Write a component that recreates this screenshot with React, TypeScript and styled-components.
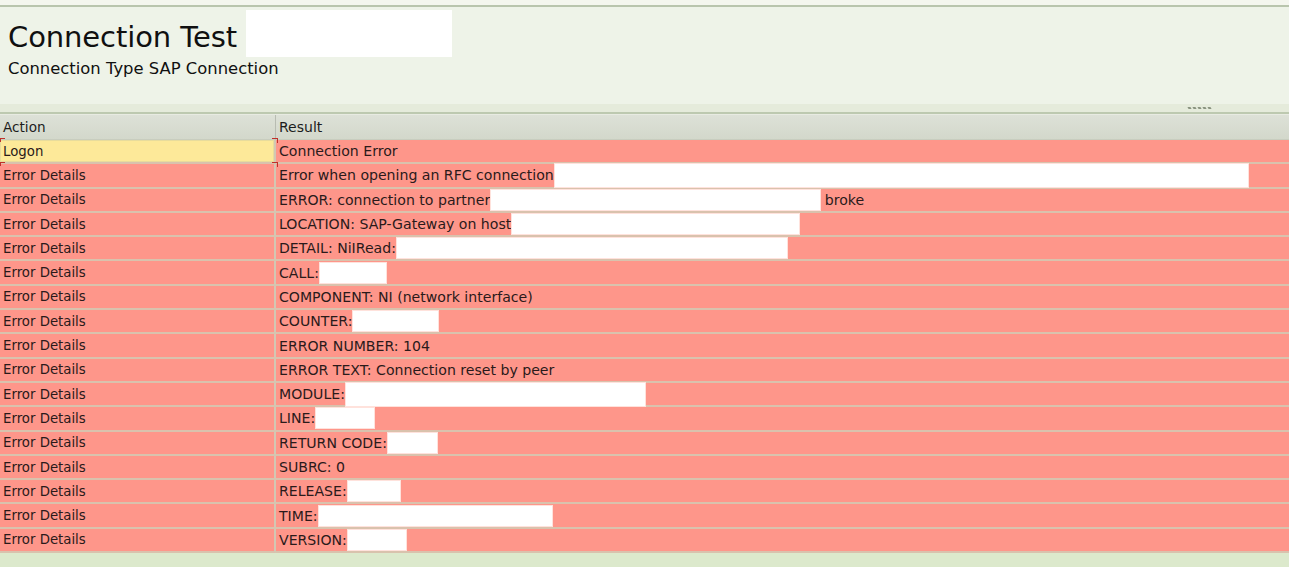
import styled, { createGlobalStyle } from "styled-components";

const Global = createGlobalStyle`
	html, body { margin: 0; padding: 0; background: #dce9cc; }
	body { font-family: "DejaVu Sans", Verdana, sans-serif; }
`;

type Piece = string | number;

// numbers are the width of a blanked-out (white) span
const rows: { action: string; result: Piece[]; tall?: boolean }[] = [
	{ action: "Logon", result: ["Connection Error"] },
	{ action: "Error Details", result: ["Error when opening an RFC connection", 693], tall: true },
	{ action: "Error Details", result: ["ERROR: connection to partner", 329, " broke"] },
	{ action: "Error Details", result: ["LOCATION: SAP-Gateway on host", 287] },
	{ action: "Error Details", result: ["DETAIL: NiIRead:", 390] },
	{ action: "Error Details", result: ["CALL:", 66] },
	{ action: "Error Details", result: ["COMPONENT: NI (network interface)"] },
	{ action: "Error Details", result: ["COUNTER:", 85] },
	{ action: "Error Details", result: ["ERROR NUMBER: 104"] },
	{ action: "Error Details", result: ["ERROR TEXT: Connection reset by peer"] },
	{ action: "Error Details", result: ["MODULE:", 299], tall: true },
	{ action: "Error Details", result: ["LINE:", 58] },
	{ action: "Error Details", result: ["RETURN CODE:", 49] },
	{ action: "Error Details", result: ["SUBRC: 0"] },
	{ action: "Error Details", result: ["RELEASE:", 52] },
	{ action: "Error Details", result: ["TIME:", 233] },
	{ action: "Error Details", result: ["VERSION:", 58] },
];

export default function App() {
	return (
		<Page>
			<Global />
			<TopStrip />
			<Header>
				<TitleLine>
					<Title>Connection Test</Title>
					<TitleBlank />
				</TitleLine>
				<Subtitle>Connection Type SAP Connection</Subtitle>
			</Header>
			<Splitter>
				<Grip>
					{Array.from({ length: 5 }).map((_, i) => (
						<Dot key={i} />
					))}
				</Grip>
			</Splitter>
			<Table>
				<HeadCell $first>Action</HeadCell>
				<HeadCell>Result</HeadCell>
				{rows.map((r, i) => (
					<Row key={i}>
						<Cell $first $tone={i === 0 ? "yellow" : "red"}>
							{r.action}
							{i <= 1 && <Mark />}
						</Cell>
						<Cell $tone="red">
							{r.result.map((p, j) =>
								typeof p === "number" ? (
									<Blank key={j} $tall={r.tall} style={{ width: p }} />
								) : (
									<span key={j}>{p}</span>
								),
							)}
							{i <= 1 && <CornerMark />}
						</Cell>
					</Row>
				))}
			</Table>
			<Fill />
		</Page>
	);
}

const Page = styled.div`
	width: 1289px;
	height: 567px;
	display: flex;
	flex-direction: column;
	overflow: hidden;
	background: #dce9cc;
`;

const TopStrip = styled.div`
	height: 5px;
	background: #f4f6ee;
	border-bottom: 2px solid #b9c5ad;
`;

const Header = styled.div`
	height: 97px;
	box-sizing: border-box;
	background: #eef3e8;
	padding: 3px 8px 0;
	color: #101010;
`;

const TitleLine = styled.div`
	display: flex;
	align-items: center;
	gap: 9px;
	height: 47px;
`;

const Title = styled.h1`
	margin: 0;
	font-weight: 400;
	font-size: 29px;
	line-height: 1;
	padding-top: 8px;
	letter-spacing: -0.1px;
`;

const TitleBlank = styled.div`
	width: 206px;
	height: 47px;
	background: #ffffff;
`;

const Subtitle = styled.div`
	font-size: 16.4px;
	line-height: 20px;
	margin-top: 2px;
`;

const Splitter = styled.div`
	height: 8px;
	background: #e5ebdb;
	border-bottom: 2px solid #bdc9b0;
	display: flex;
	justify-content: flex-end;
	align-items: center;
	padding-right: 78px;
`;

const Grip = styled.div`
	display: flex;
	gap: 2px;
	margin-top: -1px;
`;

const Dot = styled.span`
	width: 3px;
	height: 2px;
	background: #8a9480;
	transform: skewX(30deg);
`;

const Table = styled.div`
	display: grid;
	grid-template-columns: 276px 1fr;
	grid-template-rows: 25px;
	grid-auto-rows: 24.3px;
	background: #d7c3ae;
	border-top: 1px solid #e8ebe2;
`;

const HeadCell = styled.div<{ $first?: boolean }>`
	display: flex;
	align-items: center;
	padding-left: 3px;
	font-size: ${(p) => (p.$first ? "13.6px" : "14px")};
	color: #1c1c1c;
	background: linear-gradient(180deg, #dde1d7 0%, #d3d8cb 100%);
	border-right: ${(p) => (p.$first ? "1px solid #b8bcb2" : "none")};
	border-bottom: 1px solid #c8cdbf;
	box-sizing: border-box;
`;

const Row = styled.div`
	display: contents;
`;

const Cell = styled.div<{ $first?: boolean; $tone: "red" | "yellow" }>`
	position: relative;
	display: flex;
	align-items: center;
	padding-left: 3px;
	box-sizing: border-box;
	font-size: ${(p) => (p.$first ? "13.3px" : "14.1px")};
	color: #2a1a1a;
	white-space: pre;
	background: ${(p) => (p.$tone === "yellow" ? "#fde999" : "#fe968a")};
	border-bottom: 2px solid #d9c2ad;
	border-right: ${(p) => (p.$first ? "2px solid #d3c7b3" : "none")};
	${(p) => p.$tone === "yellow" && "box-shadow: inset 0 0 0 1px #e8dc9c;"}
`;

const Blank = styled.span<{ $tall?: boolean }>`
	display: inline-block;
	height: ${(p) => (p.$tall ? "23px" : "20px")};
	background: #ffffff;
	box-shadow: 0 0 0 1px #ffe2dc;
	margin-left: 1px;
`;

const Mark = styled.span`
	position: absolute;
	left: 0;
	top: -2px;
	width: 4px;
	height: 3px;
	border-top: 1px solid #c0302a;
	border-left: 1px solid #c0302a;
`;

const CornerMark = styled.span`
	position: absolute;
	left: -4px;
	top: -2px;
	width: 5px;
	height: 4px;
	border-top: 1px solid #c0302a;
	border-right: 1px solid #c0302a;
`;

const Fill = styled.div`
	flex: 1;
	background: #dce9cc;
`;
